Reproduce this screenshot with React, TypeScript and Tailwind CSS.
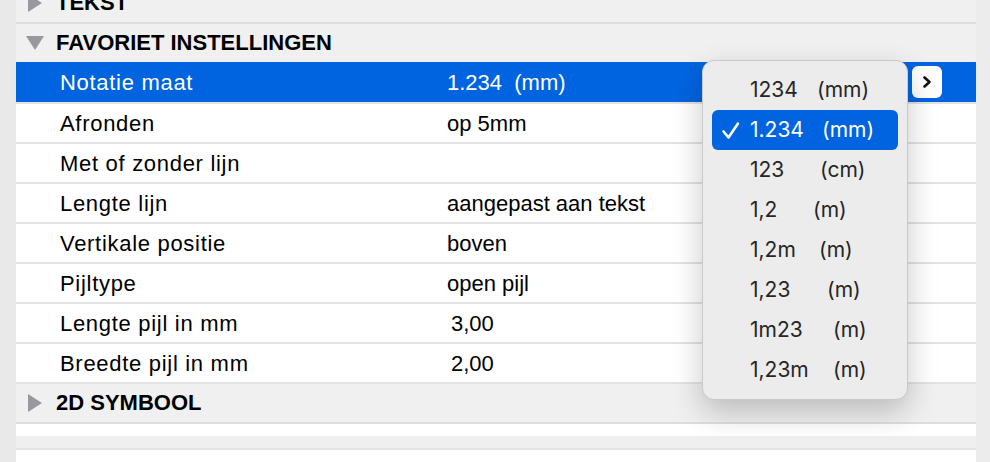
import React from 'react';

const rows = [
  { label: 'Notatie maat', value: '1.234  (mm)', active: true },
  { label: 'Afronden', value: 'op 5mm' },
  { label: 'Met of zonder lijn', value: '' },
  { label: 'Lengte lijn', value: 'aangepast aan tekst' },
  { label: 'Vertikale positie', value: 'boven' },
  { label: 'Pijltype', value: 'open pijl' },
  { label: 'Lengte pijl in mm', value: '3,00', shift: true },
  { label: 'Breedte pijl in mm', value: '2,00', shift: true },
];

const options = [
  { a: '1234', b: '(mm)', pos: 'left-[67px]' },
  { a: '1.234', b: '(mm)', pos: 'left-[72px]', checked: true },
  { a: '123', b: '(cm)', pos: 'left-[70px]' },
  { a: '1,2', b: '(m)', pos: 'left-[63px]' },
  { a: '1,2m', b: '(m)', pos: 'left-[69px]' },
  { a: '1,23', b: '(m)', pos: 'left-[77px]' },
  { a: '1m23', b: '(m)', pos: 'left-[83px]' },
  { a: '1,23m', b: '(m)', pos: 'left-[83px]' },
];

const Triangle = ({ down }: { down?: boolean }) => (
  <svg width="18" height="18" viewBox="0 0 18 18" className="shrink-0">
    {down ? <polygon points="0,2 18,2 9,16" fill="#98999c" /> : <polygon points="2,0 16,9 2,18" fill="#98999c" />}
  </svg>
);

const Header = ({ title, down, top, border = true }: { title: string; down?: boolean; top?: boolean; border?: boolean }) => (
  <div
    className={`flex items-center bg-[#f0f0f0] pl-[10px] gap-[12px] ${border ? 'h-[40px] border-b-2 border-[#dedede]' : 'h-[38px]'} ${top ? '-mt-[16px]' : ''}`}
  >
    <Triangle down={down} />
    <span className="text-[22px] font-bold text-black leading-none">{title}</span>
  </div>
);

export default function App() {
  return (
    <div className="w-[990px] h-[462px] overflow-hidden bg-[#ebebeb] flex font-['Liberation_Sans',Arial,sans-serif]">
      <div className="w-[16px] shrink-0 bg-[#e9e9e9]" />
      <div className="w-[960px] shrink-0 bg-white relative flex flex-col">
        <Header title="TEKST" top />
        <Header title="FAVORIET INSTELLINGEN" down border={false} />
        {rows.map((r) => (
          <div
            key={r.label}
            className={`relative flex items-center shrink-0 border-b-2 border-[#e2e2e2] text-[22px] ${r.active ? 'h-[42px] bg-[#0064e0] text-white' : 'h-[40px] bg-white text-black'}`}
          >
            <span className="pl-[44px] w-[431px] shrink-0 tracking-[0.7px]">{r.label}</span>
            <span className={`whitespace-pre ${r.shift ? 'pl-[4px]' : ''}`}>{r.value}</span>
            {r.active && (
              <div className="absolute left-[896px] top-[4px] w-[30px] h-[32px] bg-white rounded-[6px] flex items-center justify-center">
                <svg width="12" height="14" viewBox="0 0 12 14">
                  <polyline points="3.5,2.5 8.5,7 3.5,11.5" fill="none" stroke="#111" strokeWidth="2.6" strokeLinecap="round" strokeLinejoin="round" />
                </svg>
              </div>
            )}
          </div>
        ))}
        <Header title="2D SYMBOOL" />
        <div className="h-[12px] shrink-0 bg-white" />
        <div className="h-[14px] shrink-0 bg-[#efefef] border-b-2 border-[#e2e2e2]" />
        <div className="flex-1 bg-white" />

        <div className="absolute left-[686px] top-[60px] w-[206px] h-[340px] bg-[#ececec] rounded-[12px] border border-[#c9c9c9] shadow-[0_12px_30px_rgba(0,0,0,0.22)] p-[9px] font-['Inter','Liberation_Sans',sans-serif] text-[21px] text-[#262626]">
          {options.map((o) => (
            <div
              key={o.a}
              className={`relative h-[40px] flex items-center rounded-[6px] ${o.checked ? 'bg-[#0064e0] text-white' : ''}`}
            >
              {o.checked && (
                <svg width="20" height="20" viewBox="0 0 20 20" className="absolute left-[9px] top-[11px]">
                  <polyline points="2.5,10.5 7.5,16.5 17,2.5" fill="none" stroke="#fff" strokeWidth="2.6" strokeLinecap="round" strokeLinejoin="round" />
                </svg>
              )}
              <span className="absolute left-[38px]">{o.a}</span>
              <span className={`absolute ${o.pos} ml-[38px]`}>{o.b}</span>
            </div>
          ))}
        </div>
      </div>
      <div className="flex-1 bg-[#ececec]" />
    </div>
  );
}
